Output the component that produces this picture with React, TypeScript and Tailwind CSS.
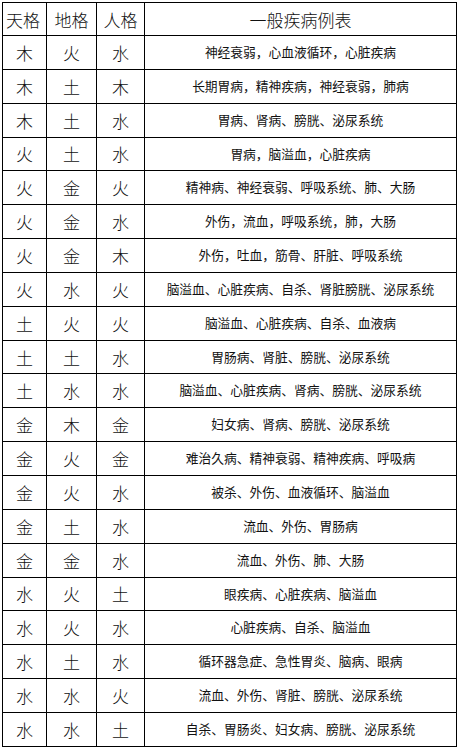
import React from 'react';

interface Row {
  tian: string;
  di: string;
  ren: string;
  bing: string;
}

const rows: Row[] = [
  { tian: '木', di: '火', ren: '水', bing: '神经衰弱，心血液循环，心脏疾病' },
  { tian: '木', di: '土', ren: '木', bing: '长期胃病，精神疾病，神经衰弱，肺病' },
  { tian: '木', di: '土', ren: '水', bing: '胃病、肾病、膀胱、泌尿系统' },
  { tian: '火', di: '土', ren: '水', bing: '胃病，脑溢血，心脏疾病' },
  { tian: '火', di: '金', ren: '火', bing: '精神病、神经衰弱、呼吸系统、肺、大肠' },
  { tian: '火', di: '金', ren: '水', bing: '外伤，流血，呼吸系统，肺，大肠' },
  { tian: '火', di: '金', ren: '木', bing: '外伤，吐血，筋骨、肝脏、呼吸系统' },
  { tian: '火', di: '水', ren: '火', bing: '脑溢血、心脏疾病、自杀、肾脏膀胱、泌尿系统' },
  { tian: '土', di: '火', ren: '火', bing: '脑溢血、心脏疾病、自杀、血液病' },
  { tian: '土', di: '土', ren: '水', bing: '胃肠病、肾脏、膀胱、泌尿系统' },
  { tian: '土', di: '水', ren: '水', bing: '脑溢血、心脏疾病、肾病、膀胱、泌尿系统' },
  { tian: '金', di: '木', ren: '金', bing: '妇女病、肾病、膀胱、泌尿系统' },
  { tian: '金', di: '火', ren: '金', bing: '难治久病、精神衰弱、精神疾病、呼吸病' },
  { tian: '金', di: '火', ren: '水', bing: '被杀、外伤、血液循环、脑溢血' },
  { tian: '金', di: '土', ren: '水', bing: '流血、外伤、胃肠病' },
  { tian: '金', di: '金', ren: '水', bing: '流血、外伤、肺、大肠' },
  { tian: '水', di: '火', ren: '土', bing: '眼疾病、心脏疾病、脑溢血' },
  { tian: '水', di: '火', ren: '水', bing: '心脏疾病、自杀、脑溢血' },
  { tian: '水', di: '土', ren: '水', bing: '循环器急症、急性胃炎、脑病、眼病' },
  { tian: '水', di: '水', ren: '火', bing: '流血、外伤、肾脏、膀胱、泌尿系统' },
  { tian: '水', di: '水', ren: '土', bing: '自杀、胃肠炎、妇女病、膀胱、泌尿系统' },
];

const cell = 'flex items-center justify-center border-r border-b border-black overflow-hidden whitespace-nowrap';
const big = 'text-[17px] leading-none font-light';
const small = 'text-[12.75px] leading-none';

const App: React.FC = () => {
  return (
    <div
      className="w-[462px] h-[750px] bg-white pt-[2px] pl-[2px] text-[#111]"
      style={{ fontFamily: '"Noto Sans CJK SC", "Noto Sans", sans-serif' }}
    >
      <div className="grid w-[455px] grid-cols-[44px_50px_48px_312px] grid-rows-[33px_repeat(21,33.857px)] border-l border-t border-black">
        <div className={`${cell} ${big} pr-[3px]`}>天格</div>
        <div className={`${cell} ${big}`}>地格</div>
        <div className={`${cell} ${big}`}>人格</div>
        <div className={`${cell} ${big}`}>一般疾病例表</div>
        {rows.map((r, i) => (
          <React.Fragment key={i}>
            <div className={`${cell} ${big}`}>{r.tian}</div>
            <div className={`${cell} ${big}`}>{r.di}</div>
            <div className={`${cell} ${big}`}>{r.ren}</div>
            <div className={`${cell} ${small}`}>{r.bing}</div>
          </React.Fragment>
        ))}
      </div>
    </div>
  );
};

export default App;
